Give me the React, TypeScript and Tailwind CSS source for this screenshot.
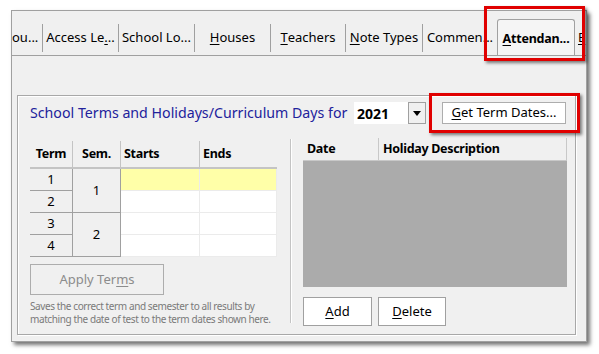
const font = "font-['Noto_Sans','DejaVu_Sans',sans-serif]";

const U = ({ children }: { children: React.ReactNode }) => (
  <span className="underline underline-offset-2">{children}</span>
);

const Tab = ({
  children,
  w,
  sep = true,
}: {
  children: React.ReactNode;
  w: string;
  sep?: boolean;
}) => (
  <div
    className={`mb-[3px] flex h-[28px] shrink-0 items-center justify-center overflow-hidden whitespace-nowrap text-[13px] text-black ${w} ${
      sep ? "border-r border-[#a0a0a0]" : ""
    }`}
  >
    {children}
  </div>
);

const TermTable = () => {
  const head = "flex items-center text-[12.5px] font-bold tracking-[-0.3px] text-black";
  const num =
    "flex items-center justify-center border-r border-b border-[#a0a0a0] text-[13px] text-black";
  const cell = "border-r border-b border-[#ebebeb]";
  return (
    <div className="mt-[3px] grid grid-cols-[43px_48px_79px_77px] grid-rows-[28px_22px_22px_22px_22px]">
      <div className={`${head} justify-center border-r border-b-2 border-[#c4c4c4]`}>Term</div>
      <div className={`${head} justify-center border-r border-b-2 border-[#c4c4c4]`}>Sem.</div>
      <div className={`${head} border-r border-b-2 border-[#c4c4c4] pl-[3px]`}>Starts</div>
      <div className={`${head} border-b-2 border-[#c4c4c4] pl-[3px]`}>Ends</div>

      <div className={num}>1</div>
      <div className={`${num} row-span-2`}>1</div>
      <div className={`${cell} bg-[#ffffa8]`} />
      <div className={`${cell} bg-[#ffffa8]`} />

      <div className={num}>2</div>
      <div className={`${cell} bg-white`} />
      <div className={`${cell} bg-white`} />

      <div className={num}>3</div>
      <div className={`${num} row-span-2`}>2</div>
      <div className={`${cell} bg-white`} />
      <div className={`${cell} bg-white`} />

      <div className={num}>4</div>
      <div className={`${cell} bg-white`} />
      <div className={`${cell} bg-white`} />
    </div>
  );
};

const HolidayTable = () => (
  <div className="flex w-[264px] flex-col">
    <div className="flex h-[23px] border-b border-r border-[#c8c8c8] bg-[#f0f0f0] text-[12.5px] font-bold tracking-[-0.3px] text-black">
      <div className="flex w-[76px] items-center border-r border-[#c8c8c8] pl-[4px]">Date</div>
      <div className="flex items-center pl-[4px]">Holiday Description</div>
    </div>
    <div className="h-[126px] bg-[#ababab]" />
  </div>
);

export default function App() {
  return (
    <div className={`h-[354px] w-[599px] overflow-hidden bg-white pl-[11px] pt-[10px] ${font}`}>
      <div className="relative flex h-[332px] w-[576px] flex-col border border-[#a0a0a0] bg-[#f0f0f0] shadow-[3px_3px_4px_rgba(0,0,0,0.55)]">
        {/* tab strip */}
        <div className="flex h-[45px] items-end overflow-hidden border-b border-[#a0a0a0]">
          <Tab w="w-[31px] justify-start">ou...</Tab>
          <Tab w="w-[76px]">
            Access Le<U>.</U>..
          </Tab>
          <Tab w="w-[76px]">School Lo...</Tab>
          <Tab w="w-[76px]">
            <U>H</U>ouses
          </Tab>
          <Tab w="w-[75px]">
            <U>T</U>eachers
          </Tab>
          <Tab w="w-[77px]">
            <U>N</U>ote Types
          </Tab>
          <Tab w="w-[74px]" sep={false}>
            Commen...
          </Tab>
          <div className="-mb-px flex h-[37px] w-[78px] shrink-0 items-center justify-center rounded-t-[3px] border border-b-0 border-[#a0a0a0] bg-[#f5f5f5] pt-[2px] text-[12.5px] font-bold tracking-[-0.2px] text-black">
            <U>A</U>ttendan...
          </div>
          <Tab w="w-[20px] justify-start pl-[3px]" sep={false}>
            <U>E</U>
          </Tab>
        </div>

        {/* page */}
        <div className="pl-[5px] pt-[39px]">
          <div className="h-[240px] w-[559px] border border-[#a8a8a8] pl-[12px] pt-[6px] shadow-[1px_1px_0_#ffffff,inset_1px_1px_0_#ffffff]">
            <div className="flex h-[22px] items-center">
              <div className="w-[319px] whitespace-nowrap text-[14.2px] text-[#22229c]">
                School Terms and Holidays/Curriculum Days for
              </div>
              <div className="ml-[5px] flex h-[22px] items-center">
                <div className="flex h-[22px] w-[54px] items-center bg-white pl-[3px] text-[14px] font-bold text-black">
                  2021
                </div>
                <div className="flex h-[22px] w-[18px] items-center justify-center border border-[#a0a0a0] bg-[#f0f0f0]">
                  <svg width="8" height="5" viewBox="0 0 8 5">
                    <path d="M0 0h8L4 5z" fill="#000" />
                  </svg>
                </div>
              </div>
              <div className="ml-[16px] flex h-[22px] w-[124px] items-center justify-center border border-[#adadad] bg-white text-[13px] text-black">
                <U>G</U>et Term Dates...
              </div>
            </div>

            <div className="mt-[14px] flex">
              <div className="flex w-[247px] flex-col">
                <TermTable />
                <div className="mt-[7px] flex h-[31px] w-[134px] items-center justify-center border border-[#adadad] bg-[#f0f0f0] text-[13px] text-[#8c8c8c]">
                  Apply Ter<U>m</U>s
                </div>
                <div className="mt-[5px] whitespace-nowrap text-[10px] leading-[13px] tracking-[-0.4px] text-[#7a7a7a]">
                  Saves the correct term and semester to all results by
                  <br />
                  matching the date of test to the term dates shown here.
                </div>
              </div>

              <div className="ml-[13px] mt-[1px] h-[184px] w-px bg-[#c4c4c4] shadow-[1px_0_0_#ffffff]" />

              <div className="ml-[12px] flex flex-col">
                <HolidayTable />
                <div className="mt-[10px] flex gap-[6px]">
                  <div className="flex h-[29px] w-[69px] items-center justify-center border border-[#a0a0a0] bg-white text-[13px] text-black">
                    <U>A</U>dd
                  </div>
                  <div className="flex h-[29px] w-[68px] items-center justify-center border border-[#a0a0a0] bg-white text-[13px] text-black">
                    <U>D</U>elete
                  </div>
                </div>
              </div>
            </div>
          </div>
        </div>

        {/* highlight boxes */}
        <div className="absolute left-[472px] top-[-5px] h-[55px] w-[101px] border-[3px] border-[#e00000] shadow-[2px_2px_3px_rgba(0,0,0,0.5)]" />
        <div className="absolute left-[417px] top-[82px] h-[40px] w-[151px] border-[3px] border-[#e00000] shadow-[2px_2px_3px_rgba(0,0,0,0.5)]" />
      </div>
    </div>
  );
}
